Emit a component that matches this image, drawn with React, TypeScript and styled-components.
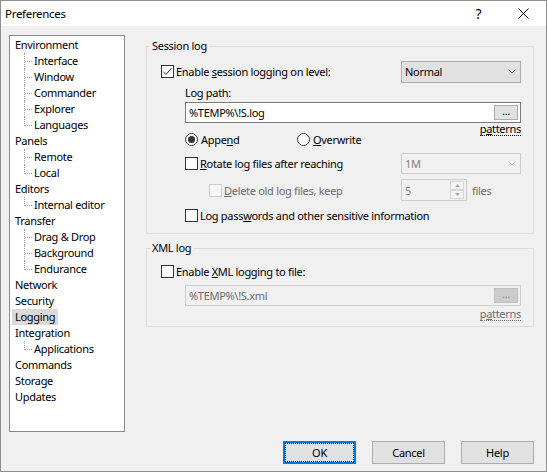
import React from 'react';
import styled, { createGlobalStyle, css } from 'styled-components';

const uiFont = `'Noto Sans', 'DejaVu Sans', sans-serif`;
const grayText = '#6d6d6d';

const GlobalStyle = createGlobalStyle`
  html, body {
    margin: 0;
    padding: 0;
    background: #ffffff;
  }
  body {
    font-family: ${uiFont};
    font-size: 11px;
    letter-spacing: -0.3px;
    color: #000000;
  }
  * {
    box-sizing: border-box;
  }
`;

const Window = styled.div`
  width: 547px;
  height: 472px;
  border: 1px solid #8f8f8f;
  background: #f0f0f0;
  display: flex;
  flex-direction: column;
`;

const TitleBar = styled.div`
  height: 25px;
  flex-shrink: 0;
  background: #ffffff;
  display: flex;
  align-items: center;
  padding-left: 4px;
`;

const Title = styled.div`
  flex: 1;
  font-size: 11.5px;
  line-height: 25px;
`;

const CaptionButton = styled.div`
  width: 45px;
  height: 25px;
  display: flex;
  align-items: center;
  justify-content: center;
  font-size: 14px;
`;

const Body = styled.div`
  flex: 1;
  display: flex;
  flex-direction: column;
  padding: 9px 12px 7px 8px;
`;

const Main = styled.div`
  display: flex;
  align-items: flex-start;
`;

const Tree = styled.ul`
  width: 116px;
  height: 397px;
  margin: 0;
  padding: 1px 0 0;
  list-style: none;
  background: #ffffff;
  border: 1px solid #8a8a8a;
`;

const TreeRow = styled.li<{ $child?: boolean; $last?: boolean }>`
  position: relative;
  height: 16px;
  line-height: 16px;
  white-space: nowrap;
  padding-left: ${(p) => (p.$child ? 21 : 2)}px;

  ${(p) =>
    p.$child &&
    css`
      &::before {
        content: '';
        position: absolute;
        left: 14px;
        top: 0;
        height: ${p.$last ? 9 : 16}px;
        border-left: 1px dotted #a0a0a0;
      }
      &::after {
        content: '';
        position: absolute;
        left: 15px;
        top: 8px;
        width: 7px;
        border-top: 1px dotted #a0a0a0;
      }
    `}
`;

const TreeLabel = styled.span<{ $selected?: boolean }>`
  display: inline-block;
  height: 16px;
  padding: 0 3px;
  background: ${(p) => (p.$selected ? '#d9d9d9' : 'transparent')};
`;

const Content = styled.div`
  width: 388px;
  margin-left: 21px;
  display: flex;
  flex-direction: column;
`;

const GroupBox = styled.fieldset<{ $gap: number }>`
  margin: ${(p) => p.$gap}px 0 0;
  padding: 0;
  border: 1px solid #dcdcdc;
  min-width: 0;
`;

const Legend = styled.legend`
  margin-left: 3px;
  padding: 0 2px;
  line-height: 14px;
`;

const GroupBody = styled.div<{ $bottom: number }>`
  display: flex;
  flex-direction: column;
  padding: 0 12px ${(p) => p.$bottom}px 14px;
`;

const Indent = styled.div`
  display: flex;
  flex-direction: column;
  padding-left: 24px;
`;

const Row = styled.div<{ $top: number; $height: number; $indent?: number }>`
  display: flex;
  align-items: center;
  justify-content: space-between;
  margin-top: ${(p) => p.$top}px;
  height: ${(p) => p.$height}px;
  padding-left: ${(p) => p.$indent ?? 0}px;
`;

const Option = styled.label<{ $disabled?: boolean; $width?: number }>`
  display: flex;
  align-items: center;
  gap: 2px;
  white-space: nowrap;
  color: ${(p) => (p.$disabled ? grayText : '#000000')};
  ${(p) => p.$width && `width: ${p.$width}px;`}
`;

const Box = styled.span<{ $disabled?: boolean }>`
  width: 13px;
  height: 13px;
  flex-shrink: 0;
  display: flex;
  align-items: center;
  justify-content: center;
  border: 1px solid ${(p) => (p.$disabled ? '#cccccc' : '#333333')};
  background: ${(p) => (p.$disabled ? '#f7f7f7' : '#ffffff')};
`;

const RadioCircle = styled.span<{ $checked?: boolean }>`
  width: 13px;
  height: 13px;
  flex-shrink: 0;
  margin-right: 1px;
  display: flex;
  align-items: center;
  justify-content: center;
  border: 1px solid #333333;
  border-radius: 50%;
  background: #ffffff;

  &::after {
    content: '';
    display: ${(p) => (p.$checked ? 'block' : 'none')};
    width: 7px;
    height: 7px;
    border-radius: 50%;
    background: #333333;
  }
`;

const Combo = styled.div<{ $disabled?: boolean }>`
  width: 120px;
  height: ${(p) => (p.$disabled ? 21 : 22)}px;
  display: flex;
  align-items: center;
  padding-left: 3px;
  border: 1px solid ${(p) => (p.$disabled ? '#cccccc' : '#adadad')};
  background: ${(p) => (p.$disabled ? '#f0f0f0' : '#e1e1e1')};
  color: ${(p) => (p.$disabled ? '#838383' : '#000000')};
`;

const ComboText = styled.span`
  flex: 1;
`;

const ComboArrow = styled.span`
  width: 17px;
  display: flex;
  justify-content: center;
`;

const Field = styled.div<{ $disabled?: boolean }>`
  width: 336px;
  height: 21px;
  display: flex;
  align-items: center;
  padding: 0 2px 0 2px;
  border: 1px solid ${(p) => (p.$disabled ? '#cccccc' : '#7a7a7a')};
  background: ${(p) => (p.$disabled ? '#f0f0f0' : '#ffffff')};
`;

const FieldInput = styled.input`
  flex: 1;
  min-width: 0;
  border: none;
  outline: none;
  padding: 0 0 0 1px;
  background: transparent;
  font: inherit;
  letter-spacing: inherit;
  color: inherit;

  &:disabled {
    color: ${grayText};
  }
`;

const BrowseButton = styled.span<{ $disabled?: boolean }>`
  width: 24px;
  height: 15px;
  display: flex;
  align-items: center;
  justify-content: center;
  line-height: 10px;
  font-size: 11px;
  padding-bottom: 3px;
  border: 1px solid ${(p) => (p.$disabled ? '#bfbfbf' : '#adadad')};
  background: ${(p) => (p.$disabled ? '#cccccc' : '#e1e1e1')};
  color: ${(p) => (p.$disabled ? '#8a8a8a' : '#000000')};
`;

const PatternsRow = styled.div<{ $height: number; $top?: number; $disabled?: boolean }>`
  display: flex;
  justify-content: flex-end;
  height: ${(p) => p.$height}px;
  margin-top: ${(p) => p.$top ?? 0}px;
  line-height: 14px;
  color: ${(p) => (p.$disabled ? grayText : '#000000')};
`;

const PatternsLink = styled.span`
  height: 13px;
  line-height: 12px;
  border-bottom: 1px dotted currentColor;
`;

const Right = styled.div`
  width: 120px;
  display: flex;
  align-items: center;
  gap: 5px;
  color: ${grayText};
`;

const Spin = styled.div`
  width: 66px;
  height: 22px;
  display: flex;
  align-items: center;
  padding: 0 2px 0 3px;
  border: 1px solid #cccccc;
  background: #f0f0f0;
  color: #838383;
`;

const SpinButtons = styled.div`
  width: 14px;
  display: flex;
  flex-direction: column;
`;

const SpinButton = styled.span`
  height: 9px;
  display: flex;
  align-items: center;
  justify-content: center;
  border: 1px solid #d6d6d6;
  background: #f4f4f4;
`;

const Footer = styled.div`
  display: flex;
  justify-content: flex-end;
  gap: 16px;
  margin-top: 9px;
`;

const DialogButton = styled.button<{ $default?: boolean }>`
  width: 73px;
  height: 23px;
  padding: 0;
  font-family: ${uiFont};
  font-size: 11px;
  letter-spacing: -0.3px;
  color: #000000;
  background: #e1e1e1;
  border: ${(p) => (p.$default ? '2px solid #0078d7' : '1px solid #adadad')};
  ${(p) =>
    p.$default &&
    css`
      outline: 1px dotted #000000;
      outline-offset: -3px;
    `}
`;

const Check = () => (
  <svg width="11" height="11" viewBox="0 0 11 11">
    <path d="M1 5.5 L4 8.5 L9.5 2" fill="none" stroke="#333333" strokeWidth="1" />
  </svg>
);

const Chevron = ({ color }: { color: string }) => (
  <svg width="8" height="5" viewBox="0 0 8 5">
    <path d="M0.5 0.5 L4 4 L7.5 0.5" fill="none" stroke={color} strokeWidth="1" />
  </svg>
);

const Triangle = ({ up }: { up?: boolean }) => (
  <svg width="5" height="3" viewBox="0 0 5 3">
    <path d={up ? 'M0 3 L2.5 0 L5 3 Z' : 'M0 0 L2.5 3 L5 0 Z'} fill="#a8a8a8" />
  </svg>
);

const CloseGlyph = () => (
  <svg width="11" height="11" viewBox="0 0 11 11">
    <path d="M0.5 0.5 L10.5 10.5 M10.5 0.5 L0.5 10.5" stroke="#000000" strokeWidth="1" />
  </svg>
);

interface TreeNode {
  label: string;
  children?: string[];
}

const tree: TreeNode[] = [
  { label: 'Environment', children: ['Interface', 'Window', 'Commander', 'Explorer', 'Languages'] },
  { label: 'Panels', children: ['Remote', 'Local'] },
  { label: 'Editors', children: ['Internal editor'] },
  { label: 'Transfer', children: ['Drag & Drop', 'Background', 'Endurance'] },
  { label: 'Network' },
  { label: 'Security' },
  { label: 'Logging' },
  { label: 'Integration', children: ['Applications'] },
  { label: 'Commands' },
  { label: 'Storage' },
  { label: 'Updates' },
];

const selectedPage = 'Logging';

const CheckBox = ({ checked, disabled }: { checked?: boolean; disabled?: boolean }) => (
  <Box $disabled={disabled}>{checked && <Check />}</Box>
);

const App = () => {
  return (
    <>
      <GlobalStyle />
      <Window>
        <TitleBar>
          <Title>Preferences</Title>
          <CaptionButton>?</CaptionButton>
          <CaptionButton>
            <CloseGlyph />
          </CaptionButton>
        </TitleBar>
        <Body>
          <Main>
            <Tree>
              {tree.map((node) => (
                <React.Fragment key={node.label}>
                  <TreeRow>
                    <TreeLabel $selected={node.label === selectedPage}>{node.label}</TreeLabel>
                  </TreeRow>
                  {node.children?.map((child, i) => (
                    <TreeRow key={child} $child $last={i === node.children!.length - 1}>
                      <TreeLabel>{child}</TreeLabel>
                    </TreeRow>
                  ))}
                </React.Fragment>
              ))}
            </Tree>
            <Content>
              <GroupBox $gap={4}>
                <Legend>Session log</Legend>
                <GroupBody $bottom={10}>
                  <Row $top={8} $height={21}>
                    <Option>
                      <CheckBox checked />
                      <span>
                        Enable <u>s</u>ession logging on level:
                      </span>
                    </Option>
                    <Combo>
                      <ComboText>Normal</ComboText>
                      <ComboArrow>
                        <Chevron color="#606060" />
                      </ComboArrow>
                    </Combo>
                  </Row>
                  <Indent>
                    <Row $top={3} $height={14}>
                      <span>Log path:</span>
                    </Row>
                    <Row $top={3} $height={21}>
                      <Field>
                        <FieldInput defaultValue="%TEMP%\!S.log" />
                        <BrowseButton>...</BrowseButton>
                      </Field>
                    </Row>
                    <PatternsRow $height={9}>
                      <PatternsLink>
                        p<u>a</u>tterns
                      </PatternsLink>
                    </PatternsRow>
                    <Row $top={0} $height={15} style={{ justifyContent: 'flex-start' }}>
                      <Option $width={112}>
                        <RadioCircle $checked />
                        <span>
                          Appe<u>n</u>d
                        </span>
                      </Option>
                      <Option>
                        <RadioCircle />
                        <span>
                          <u>O</u>verwrite
                        </span>
                      </Option>
                    </Row>
                    <Row $top={6} $height={21}>
                      <Option>
                        <CheckBox />
                        <span>
                          <u>R</u>otate log files after reaching
                        </span>
                      </Option>
                      <Combo $disabled>
                        <ComboText>1M</ComboText>
                        <ComboArrow>
                          <Chevron color="#c2c2c2" />
                        </ComboArrow>
                      </Combo>
                    </Row>
                    <Row $top={5} $height={22} $indent={24}>
                      <Option $disabled>
                        <CheckBox disabled />
                        <span>
                          <u>D</u>elete old log files, keep
                        </span>
                      </Option>
                      <Right>
                        <Spin>
                          <ComboText>5</ComboText>
                          <SpinButtons>
                            <SpinButton>
                              <Triangle up />
                            </SpinButton>
                            <SpinButton>
                              <Triangle />
                            </SpinButton>
                          </SpinButtons>
                        </Spin>
                        <span>files</span>
                      </Right>
                    </Row>
                    <Row $top={7} $height={15}>
                      <Option>
                        <CheckBox />
                        <span>
                          Log pass<u>w</u>ords and other sensitive information
                        </span>
                      </Option>
                    </Row>
                  </Indent>
                </GroupBody>
              </GroupBox>

              <GroupBox $gap={7}>
                <Legend>XML log</Legend>
                <GroupBody $bottom={4}>
                  <Row $top={9} $height={15}>
                    <Option>
                      <CheckBox />
                      <span>
                        Enable <u>X</u>ML logging to file:
                      </span>
                    </Option>
                  </Row>
                  <Indent>
                    <Row $top={6} $height={21}>
                      <Field $disabled>
                        <FieldInput disabled defaultValue="%TEMP%\!S.xml" />
                        <BrowseButton $disabled>...</BrowseButton>
                      </Field>
                    </Row>
                    <PatternsRow $height={14} $top={2} $disabled>
                      <PatternsLink>
                        p<u>a</u>tterns
                      </PatternsLink>
                    </PatternsRow>
                  </Indent>
                </GroupBody>
              </GroupBox>
            </Content>
          </Main>
          <Footer>
            <DialogButton $default>OK</DialogButton>
            <DialogButton>Cancel</DialogButton>
            <DialogButton>Help</DialogButton>
          </Footer>
        </Body>
      </Window>
    </>
  );
};

export default App;
